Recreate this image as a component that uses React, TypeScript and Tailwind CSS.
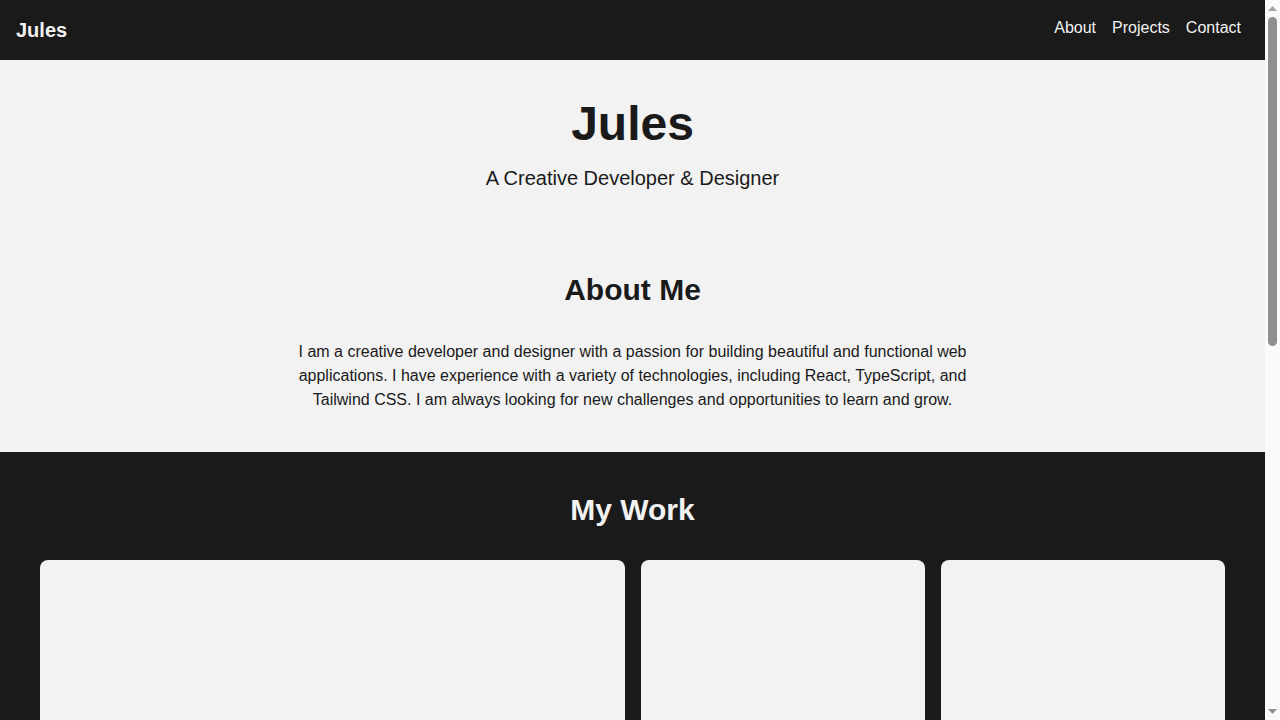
import React from 'react';

const projects = [
  { id: 1, title: 'Project One', span: 'col-span-2' },
  { id: 2, title: 'Project Two', span: '' },
  { id: 3, title: 'Project Three', span: '' },
  { id: 4, title: 'Project Four', span: '' },
  { id: 5, title: 'Project Five', span: '' },
  { id: 6, title: 'Project Six', span: 'col-span-2' },
];

function Scrollbar() {
  return (
    <div className="w-[15px] h-full bg-[#fafafa] flex flex-col items-center shrink-0">
      <svg width="15" height="17" viewBox="0 0 15 17" className="shrink-0">
        <polygon points="3,11 12,11 7.5,6" fill="#a3a3a3" />
      </svg>
      <div className="flex-1 w-full px-[3px]">
        <div className="h-[329px] w-[9px] rounded-full bg-[#8f8f8f]" />
      </div>
      <svg width="15" height="17" viewBox="0 0 15 17" className="shrink-0">
        <polygon points="3,6 12,6 7.5,11" fill="#8f8f8f" />
      </svg>
    </div>
  );
}

export default function App() {
  return (
    <div className="h-screen flex bg-[#f2f2f2] text-[#1a1a1a] font-['Liberation_Sans',Arial,sans-serif]">
      <main className="flex-1 min-w-0 overflow-y-auto">
        <header className="h-[60px] bg-[#1a1a1a] text-[#f2f2f2] flex items-center justify-between pl-4 pr-6">
          <div className="text-xl font-bold">Jules</div>
          <nav className="flex gap-4 text-base pb-1">
            <a href="#about">About</a>
            <a href="#projects">Projects</a>
            <a href="#contact">Contact</a>
          </nav>
        </header>

        <section className="py-10 text-center">
          <h1 className="text-5xl font-bold leading-none mb-4">Jules</h1>
          <p className="text-xl">A Creative Developer &amp; Designer</p>
        </section>

        <section id="about" className="py-10 text-center">
          <h2 className="text-3xl font-bold mb-8">About Me</h2>
          <p className="max-w-2xl mx-auto text-base leading-6">
            I am a creative developer and designer with a passion for building beautiful and functional web
            applications. I have experience with a variety of technologies, including React, TypeScript, and
            Tailwind CSS. I am always looking for new challenges and opportunities to learn and grow.
          </p>
        </section>

        <section id="projects" className="bg-[#1a1a1a] text-[#f2f2f2] px-10 py-10">
          <h2 className="text-3xl font-bold text-center mb-8">My Work</h2>
          <div className="grid grid-cols-4 gap-4">
            {projects.map(p => (
              <div key={p.id} className={`${p.span} h-[290px] bg-[#f2f2f2] rounded-lg`} />
            ))}
          </div>
        </section>

        <section id="contact" className="py-10 text-center">
          <h2 className="text-3xl font-bold mb-8">Contact</h2>
          <p className="text-base mb-6">Feel free to reach out if you'd like to work together.</p>
          <a href="mailto:jules@example.com" className="inline-block bg-[#1a1a1a] text-[#f2f2f2] px-6 py-3 rounded-lg">
            Get in Touch
          </a>
        </section>

        <footer className="bg-[#1a1a1a] text-[#f2f2f2] text-center py-6 text-sm">
          © 2024 Jules. All rights reserved.
        </footer>
      </main>
      <Scrollbar />
    </div>
  );
}
